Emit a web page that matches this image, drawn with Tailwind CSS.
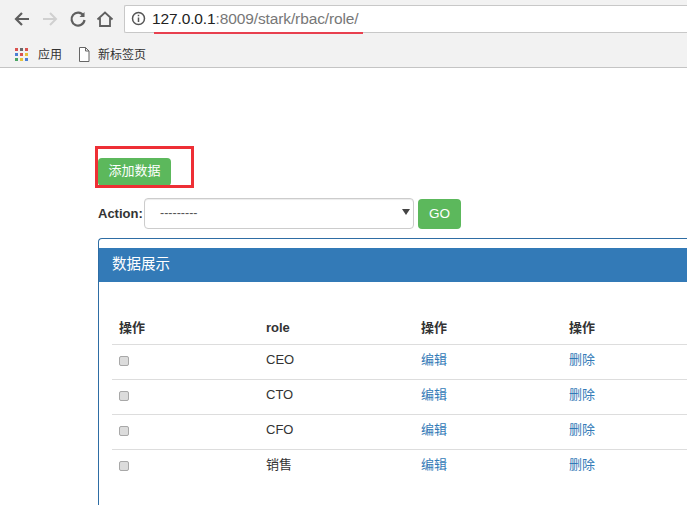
<!DOCTYPE html>
<html lang="zh">
<head>
    <meta charset="UTF-8">
    <title>stark rbac role</title>
    <script src="https://cdn.jsdelivr.net/npm/@tailwindcss/browser@4"></script>
</head>
<body class="relative w-[687px] h-[505px] overflow-hidden bg-white font-['Liberation_Sans','Noto_Sans_CJK_SC',sans-serif] text-[13px] text-[#333]">
    <!-- Browser chrome -->
    <div class="h-[68px] bg-[#f2f2f2] border-b border-[#c4c4c4]">
        <div class="flex items-center h-[36px] pt-[1px]">
            <div class="flex items-center w-[124px] shrink-0">
                <svg class="ml-[13px]" width="18" height="18" viewBox="0 0 18 18" fill="none" stroke="#5f5f5f" stroke-width="2.2"><path d="M16 9H3M9 3L3 9l6 6"/></svg>
                <svg class="ml-[10px]" width="18" height="18" viewBox="0 0 18 18" fill="none" stroke="#d0d0d0" stroke-width="2"><path d="M2 9h13M9 3l6 6-6 6"/></svg>
                <svg class="ml-[10px]" width="18" height="18" viewBox="0 0 18 18" fill="none" stroke="#5f5f5f" stroke-width="2.2"><path d="M14.5 5.5A6.5 6.5 0 1 0 15.5 10"/><path d="M15.5 2v5h-5" fill="#5f5f5f" stroke="none"/></svg>
                <svg class="ml-[9px]" width="18" height="18" viewBox="0 0 18 18" fill="none" stroke="#5f5f5f" stroke-width="1.8"><path d="M1.5 9.5L9 2.5l7.5 7M4 8v8h10V8"/></svg>
            </div>
            <div class="flex items-center flex-1 h-[28px] bg-white border border-[#c8c8c8] border-r-0 rounded-l-[2px]">
                <svg class="ml-[6px]" width="15" height="15" viewBox="0 0 15 15" fill="none" stroke="#555" stroke-width="1.5"><circle cx="7.5" cy="7.5" r="6"/><path d="M7.5 6.5v4.5M7.5 3.7v1.6"/></svg>
                <div class="ml-[6px] text-[15.5px] leading-none tracking-[-0.12px] text-[#777]"><span class="text-[#222]">127.0.0.1</span>:8009/stark/rbac/role/</div>
            </div>
        </div>
        <div class="flex items-center h-[31px] pt-[6px] pl-[15px] text-[12px] text-[#333]">
            <div class="grid grid-cols-3 gap-[2px] w-[13px] h-[13px]">
                <i class="bg-[#d9534f]"></i><i class="bg-[#6a6a6a]"></i><i class="bg-[#d9534f]"></i>
                <i class="bg-[#4a7fd4]"></i><i class="bg-[#d9534f]"></i><i class="bg-[#e8c33a]"></i>
                <i class="bg-[#4aa564]"></i><i class="bg-[#e8c33a]"></i><i class="bg-[#4a7fd4]"></i>
            </div>
            <span class="ml-[10px]">应用</span>
            <svg class="ml-[16px]" width="12" height="15" viewBox="0 0 12 15" fill="#fff" stroke="#666"><path d="M1.5.5h6l3.5 3.5v10.5H1.5zM7.5.5V4H11"/></svg>
            <span class="ml-[8px]">新标签页</span>
        </div>
    </div>

    <!-- Annotations -->
    <div class="absolute left-[154px] top-[32px] w-[209px] h-[2px] bg-[#e8404f]"></div>
    <div class="absolute left-[95px] top-[146px] w-[99px] h-[42px] border-[3px] border-[#ee2f35]"></div>

    <!-- Page content -->
    <main class="pl-[98px] pt-[90px]">
        <button class="block w-[73px] h-[28px] pb-[2px] bg-[#5cb85c] text-white text-[13px] rounded-[4px]">添加数据</button>

        <div class="flex items-center mt-[12px] h-[31px]">
            <label class="w-[46px] font-bold">Action:</label>
            <div class="relative flex items-center w-[270px] h-[31px] bg-white border border-[#ccc] rounded-[4px] pl-[15px] shadow-[inset_0_1px_1px_rgba(0,0,0,0.075)]">
                <span class="text-[12.5px] text-[#555]">---------</span>
                <span class="absolute right-[3px] top-[10px] border-x-[4px] border-x-transparent border-t-[6px] border-t-[#444]"></span>
            </div>
            <button class="ml-[4px] w-[43px] h-[30px] pt-[1px] bg-[#5cb85c] text-white text-[13.5px] rounded-[4px]">GO</button>
        </div>

        <section class="mt-[9px] w-[589px] h-[267px] border border-[#2e6da4] border-r-0 border-b-0 rounded-tl-[4px] pt-[9px]">
            <div class="flex items-center h-[34px] pl-[13px] bg-[#337ab7] text-white text-[14.5px]">数据展示</div>
            <table class="ml-[13px] mt-[27px] w-[575px] table-fixed border-collapse">
                <colgroup>
                    <col class="w-[147px]"><col class="w-[155px]"><col class="w-[148px]"><col>
                </colgroup>
                <thead>
                    <tr class="h-[35px] border-b border-[#ddd] text-left">
                        <th class="pl-[7px] pt-[2px]">操作</th><th class="pl-[7px] pt-[2px]">role</th><th class="pl-[7px] pt-[2px]">操作</th><th class="pl-[7px] pt-[2px]">操作</th>
                    </tr>
                </thead>
                <tbody>
                    <tr class="h-[35px] border-b border-[#ddd]">
                        <td class="pl-[7px]"><span class="block w-[10px] h-[10px] mb-[2px] bg-[#dcdcdc] border border-[#a8a8a8] rounded-[2px]"></span></td>
                        <td class="pl-[7px] pb-[4px]">CEO</td>
                        <td class="pl-[7px] pb-[4px] text-[#337ab7]">编辑</td>
                        <td class="pl-[7px] pb-[4px] text-[#337ab7]">删除</td>
                    </tr>
                    <tr class="h-[35px] border-b border-[#ddd]">
                        <td class="pl-[7px]"><span class="block w-[10px] h-[10px] mb-[2px] bg-[#dcdcdc] border border-[#a8a8a8] rounded-[2px]"></span></td>
                        <td class="pl-[7px] pb-[4px]">CTO</td>
                        <td class="pl-[7px] pb-[4px] text-[#337ab7]">编辑</td>
                        <td class="pl-[7px] pb-[4px] text-[#337ab7]">删除</td>
                    </tr>
                    <tr class="h-[35px] border-b border-[#ddd]">
                        <td class="pl-[7px]"><span class="block w-[10px] h-[10px] mb-[2px] bg-[#dcdcdc] border border-[#a8a8a8] rounded-[2px]"></span></td>
                        <td class="pl-[7px] pb-[4px]">CFO</td>
                        <td class="pl-[7px] pb-[4px] text-[#337ab7]">编辑</td>
                        <td class="pl-[7px] pb-[4px] text-[#337ab7]">删除</td>
                    </tr>
                    <tr class="h-[35px]">
                        <td class="pl-[7px]"><span class="block w-[10px] h-[10px] mb-[2px] bg-[#dcdcdc] border border-[#a8a8a8] rounded-[2px]"></span></td>
                        <td class="pl-[7px] pb-[4px]">销售</td>
                        <td class="pl-[7px] pb-[4px] text-[#337ab7]">编辑</td>
                        <td class="pl-[7px] pb-[4px] text-[#337ab7]">删除</td>
                    </tr>
                </tbody>
            </table>
        </section>
    </main>
</body>
</html>
